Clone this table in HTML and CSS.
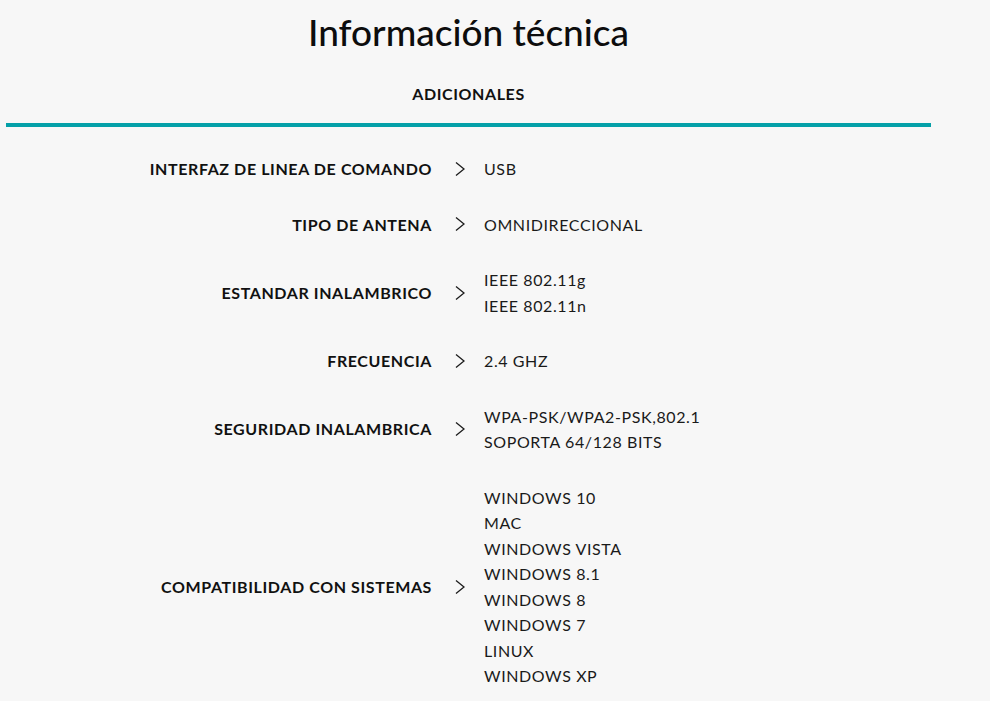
FILE: index.html
```html
<!DOCTYPE html>
<html lang="es">
<head>
<meta charset="utf-8">
<title>Información técnica</title>
<link rel="stylesheet" href="styles.css">
</head>
<body>
<main class="spec">
  <h2 class="spec-title">Información técnica</h2>
  <div class="spec-tab">ADICIONALES</div>
  <div class="spec-rule"></div>
  <div class="spec-rows">
    <div class="spec-row">
      <div class="spec-label">INTERFAZ DE LINEA DE COMANDO</div>
      <div class="spec-arrow"><svg viewBox="0 0 10 14" width="10" height="14"><path d="M1 0.5 L9 7 L1 13.5" fill="none" stroke="#1c1c1c" stroke-width="1.3"/></svg></div>
      <div class="spec-value"><div>USB</div></div>
    </div>
    <div class="spec-row">
      <div class="spec-label">TIPO DE ANTENA</div>
      <div class="spec-arrow"><svg viewBox="0 0 10 14" width="10" height="14"><path d="M1 0.5 L9 7 L1 13.5" fill="none" stroke="#1c1c1c" stroke-width="1.3"/></svg></div>
      <div class="spec-value"><div>OMNIDIRECCIONAL</div></div>
    </div>
    <div class="spec-row">
      <div class="spec-label">ESTANDAR INALAMBRICO</div>
      <div class="spec-arrow"><svg viewBox="0 0 10 14" width="10" height="14"><path d="M1 0.5 L9 7 L1 13.5" fill="none" stroke="#1c1c1c" stroke-width="1.3"/></svg></div>
      <div class="spec-value"><div>IEEE 802.11g</div><div>IEEE 802.11n</div></div>
    </div>
    <div class="spec-row">
      <div class="spec-label">FRECUENCIA</div>
      <div class="spec-arrow"><svg viewBox="0 0 10 14" width="10" height="14"><path d="M1 0.5 L9 7 L1 13.5" fill="none" stroke="#1c1c1c" stroke-width="1.3"/></svg></div>
      <div class="spec-value"><div>2.4 GHZ</div></div>
    </div>
    <div class="spec-row">
      <div class="spec-label">SEGURIDAD INALAMBRICA</div>
      <div class="spec-arrow"><svg viewBox="0 0 10 14" width="10" height="14"><path d="M1 0.5 L9 7 L1 13.5" fill="none" stroke="#1c1c1c" stroke-width="1.3"/></svg></div>
      <div class="spec-value"><div>WPA-PSK/WPA2-PSK,802.1</div><div>SOPORTA 64/128 BITS</div></div>
    </div>
    <div class="spec-row">
      <div class="spec-label">COMPATIBILIDAD CON SISTEMAS</div>
      <div class="spec-arrow"><svg viewBox="0 0 10 14" width="10" height="14"><path d="M1 0.5 L9 7 L1 13.5" fill="none" stroke="#1c1c1c" stroke-width="1.3"/></svg></div>
      <div class="spec-value">
        <div>WINDOWS 10</div>
        <div>MAC</div>
        <div>WINDOWS VISTA</div>
        <div>WINDOWS 8.1</div>
        <div>WINDOWS 8</div>
        <div>WINDOWS 7</div>
        <div>LINUX</div>
        <div>WINDOWS XP</div>
      </div>
    </div>
  </div>
</main>
</body>
</html>
```

FILE: styles.css
```css
html, body {
  margin: 0;
  padding: 0;
  background: #f7f7f7;
}
body {
  font-family: Lato, "Open Sans", "Liberation Sans", sans-serif;
  color: #111;
}
.spec {
  width: 925px;
  margin-left: 6px;
}
.spec-title {
  margin: 0;
  padding-top: 9px;
  height: 45px;
  font-size: 37px;
  font-weight: 500;
  line-height: 45px;
  text-align: center;
  color: #0d0d0d;
}
.spec-tab {
  margin-top: 27px;
  height: 26px;
  line-height: 26px;
  font-size: 16px;
  font-weight: 700;
  letter-spacing: 0.6px;
  text-align: center;
  color: #111;
}
.spec-rule {
  margin-top: 16px;
  height: 4px;
  background: #04a0a8;
}
.spec-rows {
  padding-top: 14px;
}
.spec-row {
  display: flex;
  align-items: center;
  padding: 15px 0;
}
.spec-label {
  flex: 0 0 426px;
  text-align: right;
  font-size: 16px;
  font-weight: 700;
  letter-spacing: 0.6px;
  line-height: 25.5px;
  color: #111;
}
.spec-arrow {
  flex: 0 0 10px;
  margin: 0 19px 0 23px;
  display: flex;
  align-items: center;
}
.spec-arrow svg {
  display: block;
}
.spec-value {
  font-size: 16px;
  letter-spacing: 0.6px;
  line-height: 25.5px;
  color: #1a1a1a;
}
```
